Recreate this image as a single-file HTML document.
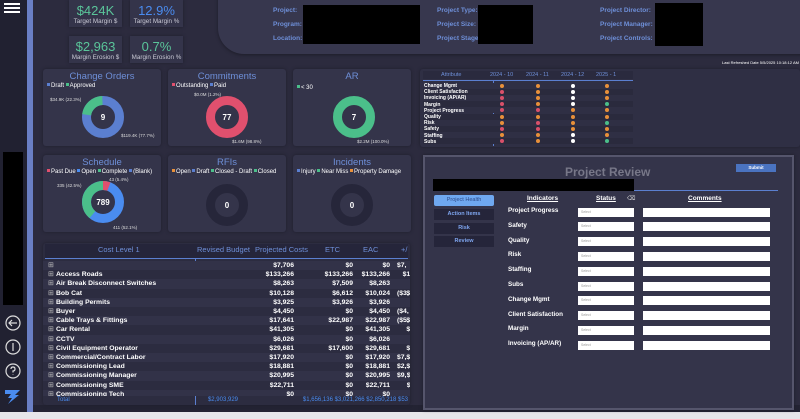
<!DOCTYPE html>
<html><head><meta charset="utf-8"><style>
*{margin:0;padding:0;box-sizing:border-box}
body{width:800px;height:419px;overflow:hidden;background:#2c2b3e;font-family:"Liberation Sans",sans-serif;position:relative;color:#fff}
.a{position:absolute}
.card{position:absolute;background:#34344a;border-radius:3px;box-shadow:0 0 3px #1f1f2c}
.kv{position:absolute;background:#34344a;text-align:center;box-shadow:0 0 3px #1f1f2c}
.kv b{display:block;font-size:13px;font-weight:normal;margin-top:3px}
.kv i{display:block;font-style:normal;font-size:6.3px;color:#c8c8d4;white-space:nowrap}
.ct{position:absolute;width:100%;text-align:center;font-size:9.5px;color:#6e8fd8;top:2px}
.lg{position:absolute;font-size:6px;color:#fff;top:14px;left:4px;white-space:nowrap}
.lg s{display:inline-block;width:3px;height:3px;text-decoration:none;margin-right:1px;vertical-align:1px}
.sm{font-size:4.5px;color:#ddd;position:absolute;white-space:nowrap}
.hl{position:absolute;font-size:6.5px;color:#6e8fd8;font-weight:bold}
.blk{position:absolute;background:#000}
.tr{position:absolute;left:0;width:367px;height:9.2px;font-size:6.8px;font-weight:bold;line-height:9.2px;white-space:nowrap}
.tr span{position:absolute;text-align:right}
.dot{position:absolute;width:4px;height:4px;border-radius:50%}
.ml{position:absolute;left:4px;font-size:5px;font-weight:bold;color:#fff}
.sel{position:absolute;left:578px;width:56px;height:9px;background:#fff;font-size:3.5px;color:#999;padding:2px 3px}
.cm{position:absolute;left:643px;width:127px;height:9px;background:#fff}
.ind{position:absolute;left:508px;font-size:6.3px;font-weight:bold;color:#fff}
.tab{position:absolute;left:434px;width:60px;height:11px;background:#25253a;font-size:5.5px;color:#7fa6f0;text-align:center;line-height:11px;font-weight:bold}
</style></head><body>
<div class="a" style="left:0;top:0;width:27px;height:412px;background:#212131"></div>
<div class="a" style="left:27px;top:0;width:6px;height:412px;background:#6a7fc4"></div>
<div class="a" style="left:4px;top:3px;width:16px;height:2px;background:#fff;box-shadow:0 4px 0 #fff,0 8px 0 #fff"></div>
<div class="blk" style="left:3px;top:152px;width:20px;height:153px"></div>
<svg class="a" style="left:2px;top:312px" width="22" height="75" viewBox="0 0 22 75"><g fill="none" stroke="#ddd" stroke-width="1.2"><circle cx="11" cy="11" r="7"/><path d="M15 11H7M10 8l-3 3 3 3"/><circle cx="11" cy="35" r="7"/><path d="M11 31v8"/><circle cx="11" cy="59" r="7"/><path d="M9 57q0-2 2-2t2 2q0 2-2 2v1.5M11 62v.5"/></g></svg>
<svg class="a" style="left:3px;top:389px" width="20" height="16"><path d="M2 1h15l-5 5h4L5 15l4-6H5l3-4H2z" fill="#4a8cf0"/></svg>
<div class="a" style="left:0;top:412px;width:800px;height:7px;background:#e6e6ea"></div>
<div class="a" style="left:33px;top:405px;width:767px;height:7px;background:#232333"></div>
<div class="kv" style="left:69px;top:0;width:53px;height:27px"><b style="color:#5ac59a">$424K</b><i>Target Margin $</i></div>
<div class="kv" style="left:130px;top:0;width:53px;height:27px"><b style="color:#4a8cf0">12.9%</b><i>Target Margin %</i></div>
<div class="kv" style="left:69px;top:36px;width:53px;height:27px"><b style="color:#5ac59a">$2,963</b><i>Margin Erosion $</i></div>
<div class="kv" style="left:130px;top:36px;width:53px;height:27px"><b style="color:#5ac59a">0.7%</b><i>Margin Erosion %</i></div>
<div class="a" style="left:218px;top:-5px;width:590px;height:59px;background:#37374e;border-radius:0 0 0 26px;box-shadow:0 1px 3px #1d1d29"></div>
<div class="hl" style="left:273px;top:7px">Project:</div><div class="hl" style="left:273px;top:21px">Program:</div><div class="hl" style="left:273px;top:35px">Location:</div>
<div class="blk" style="left:303px;top:5px;width:117px;height:39px"></div>
<div class="hl" style="left:437px;top:7px">Project Type:</div><div class="hl" style="left:437px;top:21px">Project Size:</div><div class="hl" style="left:437px;top:35px">Project Stage</div>
<div class="blk" style="left:478px;top:5px;width:55px;height:39px"></div>
<div class="hl" style="left:600px;top:7px">Project Director:</div><div class="hl" style="left:600px;top:21px">Project Manager:</div><div class="hl" style="left:600px;top:35px">Project Controls:</div>
<div class="blk" style="left:655px;top:3px;width:48px;height:43px"></div>
<div class="sm" style="left:722px;top:60px;color:#fff;font-size:4px">Last Refreshed Date 5/5/2025 10:18:12 AM</div>
<div class="card" style="left:43px;top:69px;width:118px;height:77px"><div class="ct">Change Orders</div><div class="lg"><s style="background:#5b7fd0"></s>Draft <s style="background:#4bbf8a"></s>Approved</div>
<svg class="a" style="left:38px;top:26px" width="44" height="44"><circle cx="22" cy="22" r="16.5" fill="none" stroke="#5b7fd0" stroke-width="9"/><circle cx="22" cy="22" r="16.5" fill="none" stroke="#4bbf8a" stroke-width="9" stroke-dasharray="23 200" transform="rotate(-172 22 22)"/><text x="22" y="25" fill="#fff" font-size="8" font-weight="bold" text-anchor="middle" font-family="Liberation Sans">9</text></svg>
<div class="sm" style="left:7px;top:28px">$34.9K (22.3%)</div><div class="sm" style="left:78px;top:64px">$119.4K (77.7%)</div></div>
<div class="card" style="left:168px;top:69px;width:118px;height:77px"><div class="ct">Commitments</div><div class="lg"><s style="background:#e0506e"></s>Outstanding <s style="background:#5b7fd0"></s>Paid</div>
<svg class="a" style="left:37px;top:26px" width="44" height="44"><circle cx="22" cy="22" r="16.5" fill="none" stroke="#e0506e" stroke-width="9"/><text x="22" y="25" fill="#fff" font-size="8" font-weight="bold" text-anchor="middle" font-family="Liberation Sans">77</text></svg>
<div class="sm" style="left:26px;top:23px">$0.0M (1.2%)</div><div class="sm" style="left:64px;top:70px">$1.6M (98.8%)</div></div>
<div class="card" style="left:293px;top:69px;width:118px;height:77px"><div class="ct">AR</div><div class="lg" style="top:16px"><s style="background:#4bbf8a"></s>&lt; 30</div>
<svg class="a" style="left:39px;top:26px" width="44" height="44"><circle cx="22" cy="22" r="16.5" fill="none" stroke="#4bbf8a" stroke-width="9"/><text x="22" y="25" fill="#fff" font-size="8" font-weight="bold" text-anchor="middle" font-family="Liberation Sans">7</text></svg>
<div class="sm" style="left:64px;top:70px">$2.2M (100.0%)</div></div>
<div class="card" style="left:43px;top:155px;width:118px;height:77px"><div class="ct">Schedule</div><div class="lg"><s style="background:#e0506e"></s>Past Due <s style="background:#4a8cf0"></s>Open <s style="background:#4bbf8a"></s>Complete <s style="background:#5b7fd0"></s>(Blank)</div>
<svg class="a" style="left:38px;top:25px" width="44" height="44"><circle cx="22" cy="22" r="16.5" fill="none" stroke="#4a8cf0" stroke-width="9"/><circle cx="22" cy="22" r="16.5" fill="none" stroke="#4bbf8a" stroke-width="9" stroke-dasharray="44 200" transform="rotate(130 22 22)"/><circle cx="22" cy="22" r="16.5" fill="none" stroke="#e0506e" stroke-width="9" stroke-dasharray="6 200" transform="rotate(-90 22 22)"/><text x="22" y="25" fill="#fff" font-size="8" font-weight="bold" text-anchor="middle" font-family="Liberation Sans">789</text></svg>
<div class="sm" style="left:14px;top:28px">335 (42.5%)</div><div class="sm" style="left:66px;top:22px">43 (5.4%)</div><div class="sm" style="left:70px;top:70px">411 (52.1%)</div></div>
<div class="card" style="left:168px;top:155px;width:118px;height:77px"><div class="ct">RFIs</div><div class="lg"><s style="background:#e8903a"></s>Open <s style="background:#5b7fd0"></s>Draft <s style="background:#4bbf8a"></s>Closed - Draft <s style="background:#4bbf8a"></s>Closed</div>
<svg class="a" style="left:37px;top:28px" width="44" height="44"><circle cx="22" cy="22" r="16.5" fill="none" stroke="#26263a" stroke-width="9"/><text x="22" y="25" fill="#fff" font-size="8" font-weight="bold" text-anchor="middle" font-family="Liberation Sans">0</text></svg></div>
<div class="card" style="left:293px;top:155px;width:118px;height:77px"><div class="ct">Incidents</div><div class="lg"><s style="background:#5b7fd0"></s>Injury <s style="background:#4bbf8a"></s>Near Miss <s style="background:#e8903a"></s>Property Damage</div>
<svg class="a" style="left:37px;top:28px" width="44" height="44"><circle cx="22" cy="22" r="16.5" fill="none" stroke="#26263a" stroke-width="9"/><text x="22" y="25" fill="#fff" font-size="8" font-weight="bold" text-anchor="middle" font-family="Liberation Sans">0</text></svg></div>
<div class="card" style="left:420px;top:69px;width:380px;height:78px;background:#2f2f44"></div>
<div class="a" style="left:423px;top:71px;width:210px;height:8px;background:#2a2a3e;font-size:5.5px;color:#6e8fd8;line-height:8px"><span class="a" style="left:18px">Attribute</span><span class="a" style="left:67px">2024 - 10</span><span class="a" style="left:103px">2024 - 11</span><span class="a" style="left:138px">2024 - 12</span><span class="a" style="left:173px">2025 - 1</span></div>
<div class="a" style="left:423px;top:80px;width:210px;height:1px;background:#5b7fd0"></div>
<div class="a" style="left:493px;top:81px;width:1px;height:65px;background:#5b7fd0"></div>
<div class="a" id="mx" style="left:420px;top:83px;width:220px;height:64px"></div>
<div class="card" style="left:43px;top:243px;width:367px;height:162px;background:#2c2c40"></div>
<div class="a" style="left:45px;top:244px;width:363px;height:14px;background:#25253a;font-size:7.5px;color:#6e8fd8;line-height:12px;white-space:nowrap"><span class="a" style="left:53px">Cost Level 1</span><span class="a" style="left:152px">Revised Budget</span><span class="a" style="left:210px">Projected Costs</span><span class="a" style="left:280px">ETC</span><span class="a" style="left:318px">EAC</span><span class="a" style="left:356px">+/</span></div>
<div class="a" style="left:45px;top:258px;width:363px;height:1px;background:#5b7fd0"></div>
<div class="a" style="left:195px;top:259px;width:1px;height:146px;background:#5b7fd0"></div>
<div class="a" id="tb" style="left:43px;top:259px;width:367px;height:137px;overflow:hidden"></div>
<div class="a" style="left:45px;top:396px;width:363px;height:9px;font-size:6px;color:#4a8cf0;line-height:9px;overflow:hidden;white-space:nowrap"><span class="a" style="left:12px">Total</span><span class="a" style="left:120px;width:73px;text-align:right">$2,903,929</span><span class="a" style="left:200px;width:163px;text-align:right">$1,656,136 $3,021,266 $2,850,218 $53</span></div>
<div class="a" style="left:423px;top:155px;width:371px;height:255px;background:#34344a;border:2px solid #55556c;box-shadow:0 0 3px #1d1d29"></div>
<div class="a" style="left:565px;top:165px;font-size:12px;color:#777788;font-weight:bold">Project Review</div>
<div class="a" style="left:736px;top:164px;width:40px;height:8px;background:#4a73c0;font-size:4.5px;color:#fff;text-align:center;line-height:8px;font-weight:bold">Submit</div>
<div class="blk" style="left:433px;top:179px;width:201px;height:12px"></div>
<div class="a" style="left:634px;top:190px;width:144px;height:1px;background:#5b7fd0"></div>
<div class="tab" style="top:195px;background:#6fa8f0;color:#2c4a8a;border-radius:2px;font-weight:normal">Project Health</div>
<div class="tab" style="top:209px">Action Items</div>
<div class="tab" style="top:223px">Risk</div>
<div class="tab" style="top:236px">Review</div>
<div class="a" style="left:527px;top:195px;font-size:6.5px;font-weight:bold;text-decoration:underline">Indicators</div>
<div class="a" style="left:596px;top:195px;font-size:6.5px;font-weight:bold;text-decoration:underline">Status</div>
<div class="a" style="left:627px;top:195px;font-size:6px;color:#ddd">⌫</div>
<div class="a" style="left:688px;top:195px;font-size:6.5px;font-weight:bold;text-decoration:underline">Comments</div>
<div id="pr"></div>
<script>
var M=[["Change Mgmt","oowo"],["Client Satisfaction","rowo"],["Invoicing (AP/AR)","rowo"],["Margin","rowg"],["Project Progress","rroo"],["Quality","oooo"],["Risk","orog"],["Safety","rroo"],["Staffing","oowo"],["Subs","rowg"]];
var C={o:"#e8903a",r:"#d9506a",w:"#fff",g:"#4bbf8a"},h="",X=[80,116,151,185];
M.forEach(function(m,i){var y=i*6.2;h+='<div class="a" style="left:3px;top:'+(y-0.5)+'px;width:210px;height:6px;background:'+(i%2?'#2a2a3d':'#2f2f44')+'"></div><div class="ml" style="top:'+y+'px">'+m[0]+'</div>';m[1].split("").forEach(function(c,j){h+='<div class="dot" style="left:'+X[j]+'px;top:'+(y+0.5)+'px;background:'+C[c]+'"></div>'})});
document.getElementById("mx").innerHTML=h;
var T=[["","$7,706","$0","$0","$0","$7,"],["Access Roads","$133,266","$133,266","$133,266","$133,266",""],["Air Break Disconnect Switches","$8,263","$7,509","$8,263","$8,263",""],["Bob Cat","$10,128","$6,612","$10,024","$14,046","($3,"],["Building Permits","$3,925","$3,926","$3,926","$3,926",""],["Buyer","$4,450","$0","$4,450","$8,736","($4,"],["Cable Trays & Fittings","$17,641","$22,987","$22,987","$22,987","($5,"],["Car Rental","$41,305","$0","$41,305","$41,305",""],["CCTV","$6,026","$0","$6,026","$6,026",""],["Civil Equipment Operator","$29,681","$17,600","$29,681","$29,681",""],["Commercial/Contract Labor","$17,920","$0","$17,920","$10,815","$7,"],["Commissioning Lead","$18,881","$0","$18,881","$16,807","$2,"],["Commissioning Manager","$20,995","$0","$20,995","$11,796","$9,"],["Commissioning SME","$22,711","$0","$22,711","$22,711",""],["Commissioning Tech","$0","$0","$0","$0",""]];
h="";T.forEach(function(r,i){var y=2+i*9.2;h+='<div class="tr" style="top:'+y+'px;background:'+(i%2?'#2c2c40':'#323248')+'"><span style="left:5px;font-weight:normal;color:#bbb">&#8862;</span><span style="left:13px">'+r[0]+'</span><span style="left:160px;width:91px">'+r[1]+'</span><span style="left:250px;width:60px">'+r[2]+'</span><span style="left:300px;width:47px">'+r[3]+'</span><span style="left:340px;width:48px">'+r[4]+'</span><span style="left:354px;text-align:left">'+r[5]+'</span></div>'});
document.getElementById("tb").innerHTML=h;
var P=["Project Progress","Safety","Quality","Risk","Staffing","Subs","Change Mgmt","Client Satisfaction","Margin","Invoicing (AP/AR)"];h="";
P.forEach(function(p,i){var y=207+i*14.8;h+='<div class="ind" style="top:'+y+'px">'+p+'</div><div class="sel" style="top:'+(y+0.5)+'px">Select</div><div class="cm" style="top:'+(y+0.5)+'px"></div>'});
document.getElementById("pr").innerHTML=h;
</script>
</body></html>
